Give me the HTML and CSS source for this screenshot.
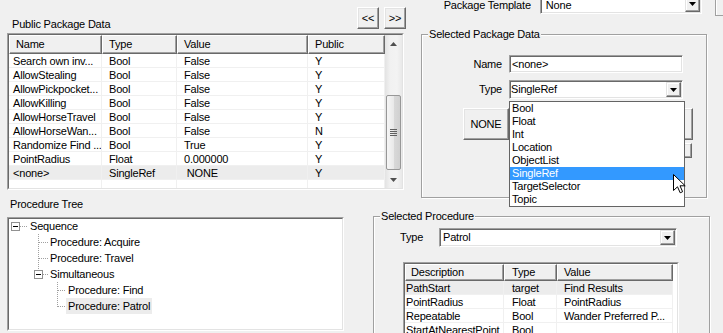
FILE: index.html
```html
<!DOCTYPE html>
<html lang="en">
<head>
<meta charset="utf-8"/>
<title>Package Editor</title>
<link rel="stylesheet" href="styles.css">
</head>
<body>
<div class="top">
  <div class="pub">
    <div class="pub-head">
      <div class="cap">Public Package Data</div>
      <div class="movers">
        <button class="btn sq">&lt;&lt;</button>
        <button class="btn sq">&gt;&gt;</button>
      </div>
    </div>
    <div class="lv lv-pub">
      <div class="lv-in">
        <div class="grid">
          <div class="row hdr"><div class="c first">Name</div><div class="c">Type</div><div class="c">Value</div><div class="c">Public</div></div>
          <div class="row"><div class="c first">Search own inv...</div><div class="c">Bool</div><div class="c">False</div><div class="c">Y</div></div>
          <div class="row"><div class="c first">AllowStealing</div><div class="c">Bool</div><div class="c">False</div><div class="c">Y</div></div>
          <div class="row"><div class="c first">AllowPickpocket...</div><div class="c">Bool</div><div class="c">False</div><div class="c">Y</div></div>
          <div class="row"><div class="c first">AllowKilling</div><div class="c">Bool</div><div class="c">False</div><div class="c">Y</div></div>
          <div class="row"><div class="c first">AllowHorseTravel</div><div class="c">Bool</div><div class="c">False</div><div class="c">Y</div></div>
          <div class="row"><div class="c first">AllowHorseWan...</div><div class="c">Bool</div><div class="c">False</div><div class="c">N</div></div>
          <div class="row"><div class="c first">Randomize Find ...</div><div class="c">Bool</div><div class="c">True</div><div class="c">Y</div></div>
          <div class="row"><div class="c first">PointRadius</div><div class="c">Float</div><div class="c">0.000000</div><div class="c">Y</div></div>
          <div class="row hot"><div class="c first">&lt;none&gt;</div><div class="c">SingleRef</div><div class="c">&nbsp;NONE</div><div class="c">Y</div></div>
          <div class="row fill"><div class="c"></div><div class="c"></div><div class="c"></div><div class="c"></div></div>
        </div>
        <div class="vs">
          <div class="vs-btn"><svg width="7" height="4"><path d="M0 4h7L3.5 0z" fill="#505050"/></svg></div>
          <div class="vs-track"><div class="thumb"><div class="grip"></div></div></div>
          <div class="vs-btn"><svg width="7" height="4"><path d="M0 0h7L3.5 4z" fill="#505050"/></svg></div>
        </div>
      </div>
    </div>
  </div>

  <div class="side">
    <div class="tmpl-row">
      <span class="tmpl-label">Package Template</span>
      <div class="combo tmpl-combo"><span class="combo-text">None</span><span class="drop"><svg width="7" height="4"><path d="M0 0h7L3.5 4z"/></svg></span></div>
      <div class="cut"></div>
    </div>
    <div class="group pkg">
      <span class="legend">Selected Package Data</span>
      <div class="form">
        <label>Name</label>
        <div class="edit">&lt;none&gt;</div>
        <label>Type</label>
        <div class="combo type-combo">
          <span class="combo-text">SingleRef</span>
          <span class="drop"><svg width="7" height="4"><path d="M0 0h7L3.5 4z"/></svg></span>
          <div class="popup">
            <div class="opt">Bool</div>
            <div class="opt">Float</div>
            <div class="opt">Int</div>
            <div class="opt">Location</div>
            <div class="opt">ObjectList</div>
            <div class="opt sel">SingleRef</div>
            <div class="opt">TargetSelector</div>
            <div class="opt">Topic</div>
            <svg class="cursor" width="13" height="20" viewBox="0 0 13 20"><path d="M0.5 0.5V16.5L4.5 12.8L7.2 18.8L9.6 17.7L7 11.8H12.2Z" fill="#fff" stroke="#000" stroke-linejoin="round"/></svg>
          </div>
        </div>
      </div>
      <div class="btn-row">
        <button class="btn none">NONE</button>
        <button class="btn wide"></button>
      </div>
      <div class="btn-row2"><button class="btn small"></button></div>
    </div>
  </div>
</div>

<div class="bottom">
  <div class="tree-pane">
    <div class="cap2">Procedure Tree</div>
    <div class="lv tree">
      <div class="lv-in tree-in">
        <svg class="lines" width="120" height="100" shape-rendering="crispEdges">
          <g stroke="#a0a0a0" stroke-dasharray="1 1" fill="none">
            <path d="M11 7.5h8"/>
            <path d="M29.5 15V51"/>
            <path d="M30 23.5h9M30 39.5h9M34 55.5h5"/>
            <path d="M48.5 63V88"/>
            <path d="M49 71.5h8M49 87.5h8"/>
          </g>
          <rect x="2.5" y="3.5" width="8" height="8" fill="#fff" stroke="#919191"/>
          <path d="M4 7.5h5" stroke="#000"/>
          <rect x="25.5" y="51.5" width="8" height="8" fill="#fff" stroke="#919191"/>
          <path d="M27 55.5h5" stroke="#000"/>
        </svg>
        <ul>
          <li class="l0">Sequence</li>
          <li class="l1">Procedure: Acquire</li>
          <li class="l1">Procedure: Travel</li>
          <li class="l1">Simultaneous</li>
          <li class="l2"><span>Procedure: Find</span></li>
          <li class="l2"><span class="sel">Procedure: Patrol</span></li>
        </ul>
      </div>
    </div>
  </div>

  <div class="group proc">
    <span class="legend">Selected Procedure</span>
    <div class="proc-type">
      <label>Type</label>
      <div class="combo patrol-combo"><span class="combo-text">Patrol</span><span class="drop"><svg width="7" height="4"><path d="M0 0h7L3.5 4z"/></svg></span></div>
    </div>
    <div class="lv lv-proc">
      <div class="lv-in">
        <div class="grid">
          <div class="row hdr"><div class="c first">Description</div><div class="c">Type</div><div class="c">Value</div></div>
          <div class="row hot"><div class="c first">PathStart</div><div class="c">target</div><div class="c">Find Results</div></div>
          <div class="row"><div class="c first">PointRadius</div><div class="c">Float</div><div class="c">PointRadius</div></div>
          <div class="row"><div class="c first">Repeatable</div><div class="c">Bool</div><div class="c">Wander Preferred P...</div></div>
          <div class="row"><div class="c first">StartAtNearestPoint</div><div class="c">Bool</div><div class="c"></div></div>
        </div>
      </div>
    </div>
  </div>
</div>
</body>
</html>
```

FILE: styles.css
```css
body{margin:0;width:723px;height:333px;overflow:hidden;background:#f0f0f0;color:#000;font:11px "Liberation Sans",Arial,sans-serif;letter-spacing:-0.2px}
button{font:inherit;letter-spacing:inherit;color:#000;padding:0}

/* raised / sunken win controls */
.btn{background:#f0f0f0;border:1px solid;border-color:#fff #696969 #696969 #fff;box-shadow:inset -1px -1px #a0a0a0,inset 1px 1px #e3e3e3;box-sizing:border-box}
.lv{border:1px solid;border-color:#a0a0a0 #fff #fff #a0a0a0}
.lv-in{border:1px solid;border-color:#696969 #e3e3e3 #e3e3e3 #696969;background:#fff;display:flex;overflow:hidden}

.top{display:flex;height:197px}
.pub{margin-left:7px;width:397px}
.pub-head{display:flex;align-items:flex-end;height:33px}
.cap{padding-left:5px;line-height:14px;margin-bottom:2px}
.movers{display:flex;gap:5px;margin-left:auto;margin-right:-2px;margin-bottom:4px}
.sq{width:22px;height:22px}

.grid{flex:1}
.row{display:grid;height:14px;line-height:14px}
.c{box-sizing:border-box;border-right:1px solid #f0f0f0;border-bottom:1px solid #f0f0f0;padding-left:7px;white-space:nowrap;overflow:hidden}
.hdr .c{background:#f0f0f0;border:1px solid;border-color:#fff #696969 #696969 #fff;box-shadow:inset -1px -1px #a0a0a0;padding-left:6px}
.hot .c{background:#ececec}
.fill{height:8px}
.fill .c{border-bottom:0}

.lv-pub .lv-in{height:153px}
.lv-pub .row{grid-template-columns:93px 75px 131px 77px}
.lv-pub .hdr{height:19px;line-height:17px}
.lv-pub .c.first{padding-left:4px}
.lv-pub .hdr .c.first{padding-left:6px}

.vs{width:17px;display:flex;flex-direction:column;background:linear-gradient(to right,#e3e3e3,#f1f1f1 30%,#f3f3f3 70%,#e9e9e9)}
.vs-btn{height:17px;display:flex;align-items:center;justify-content:center}
.vs-track{flex:1}
.thumb{margin:43px 1px 0;height:75px;box-sizing:border-box;border:1px solid #979797;border-radius:2px;background:linear-gradient(to right,#f6f6f6,#e9e9e9 50%,#d9d9d9 51%,#d0d0d0);display:flex;align-items:center;justify-content:center}
.grip{width:7px;height:7px;background:repeating-linear-gradient(to bottom,#606060 0 1px,transparent 1px 2px)}

/* right side */
.side{margin-left:17px;width:302px}
.tmpl-row{display:flex;margin-top:-6px;height:20px}
.tmpl-label{width:111px;text-align:right;line-height:22px}
.cut{margin:6px 0 0 13px;width:8px;height:16px;box-sizing:border-box;border-left:1px solid #a0a0a0;border-bottom:1px solid #a0a0a0;box-shadow:inset 1px 0 #fff}

.combo,.edit{position:relative;box-sizing:border-box;border:1px solid;border-color:#a0a0a0 #fff #fff #a0a0a0;box-shadow:inset 1px 1px #696969,inset -1px -1px #e3e3e3;background:#fff}
.combo{display:flex}
.combo-text{flex:1;line-height:17px;padding-left:2px}
.drop{width:15px;margin:1px;box-sizing:border-box;border:1px solid;border-color:#e3e3e3 #696969 #696969 #e3e3e3;box-shadow:inset -1px -1px #a0a0a0,inset 1px 1px #fff;background:#f0f0f0;display:flex;align-items:center;justify-content:center}
.tmpl-combo{margin-left:9px;width:164px;height:20px}
.tmpl-combo .combo-text{padding-left:5px;line-height:20px}

.group{position:relative;box-sizing:border-box;border:1px solid #a0a0a0;box-shadow:1px 1px 0 #fff,inset 1px 1px 0 #fff}
.legend{position:absolute;top:-8px;left:6px;padding:0 1px;background:#f0f0f0;line-height:14px}
.pkg{margin-top:20px;width:286px;height:164px}

.form{display:grid;grid-template-columns:80px 174px;column-gap:7px;row-gap:7px;margin-top:20px}
.form label{text-align:right;line-height:18px}
.edit{height:18px;line-height:16px;padding-left:2px}
.type-combo{height:19px}
.type-combo .combo-text{padding-left:1px}

.popup{position:absolute;top:calc(100% + 3px);left:-1px;width:176px;box-sizing:border-box;border:1px solid #646464;background:#fff;z-index:2}
.opt{height:13px;line-height:13px;padding-left:2px}
.opt.sel{background:#3399ff;color:#fff}
.cursor{position:absolute;left:163px;top:72px}

.btn-row{display:flex;margin-top:9px;padding-left:41px}
.none{width:46px;height:32px}
.wide{margin-left:6px;width:178px;height:32px}
.btn-row2{display:flex;justify-content:flex-end;margin:3px 14px 0 0}
.small{width:90px;height:15px}

/* bottom */
.bottom{display:flex}
.tree-pane{margin-left:7px;width:337px}
.cap2{padding-left:3px;line-height:14px;margin-bottom:6px}
.tree-in{position:relative;height:110px}
.lines{position:absolute;left:0;top:0}
.tree ul{list-style:none;margin:-1px 0 0;padding:0;position:relative}
.tree li{height:16px;line-height:16px;white-space:nowrap}
.l0{padding-left:21px}
.l1{padding-left:41px}
.l2{padding-left:57px}
.l2 span{padding:0 2px;display:inline-block}
.l2 .sel{background:#ececec}

.proc{margin:19px 0 0 29px;width:337px;height:136px}
.proc-type{display:flex;margin:11px 0 0 26px}
.proc-type label{width:39px;line-height:19px}
.patrol-combo{width:238px;height:19px}
.patrol-combo .combo-text{padding-left:3px}

.lv-proc{margin:15px 0 0 29px;width:274px}
.lv-proc .lv-in{height:72px}
.lv-proc .row{grid-template-columns:99px 53px 116px}
.lv-proc .hdr{height:17px;line-height:15px}
.lv-proc .c{padding-left:8px}
.lv-proc .c:nth-child(3){padding-left:7px}
.lv-proc .c.first{padding-left:1px}
.lv-proc .hdr .c{padding-left:7px}
.lv-proc .hdr .c.first{padding-left:5px}
.lv-proc .hdr .c:nth-child(3){padding-left:6px}
```
